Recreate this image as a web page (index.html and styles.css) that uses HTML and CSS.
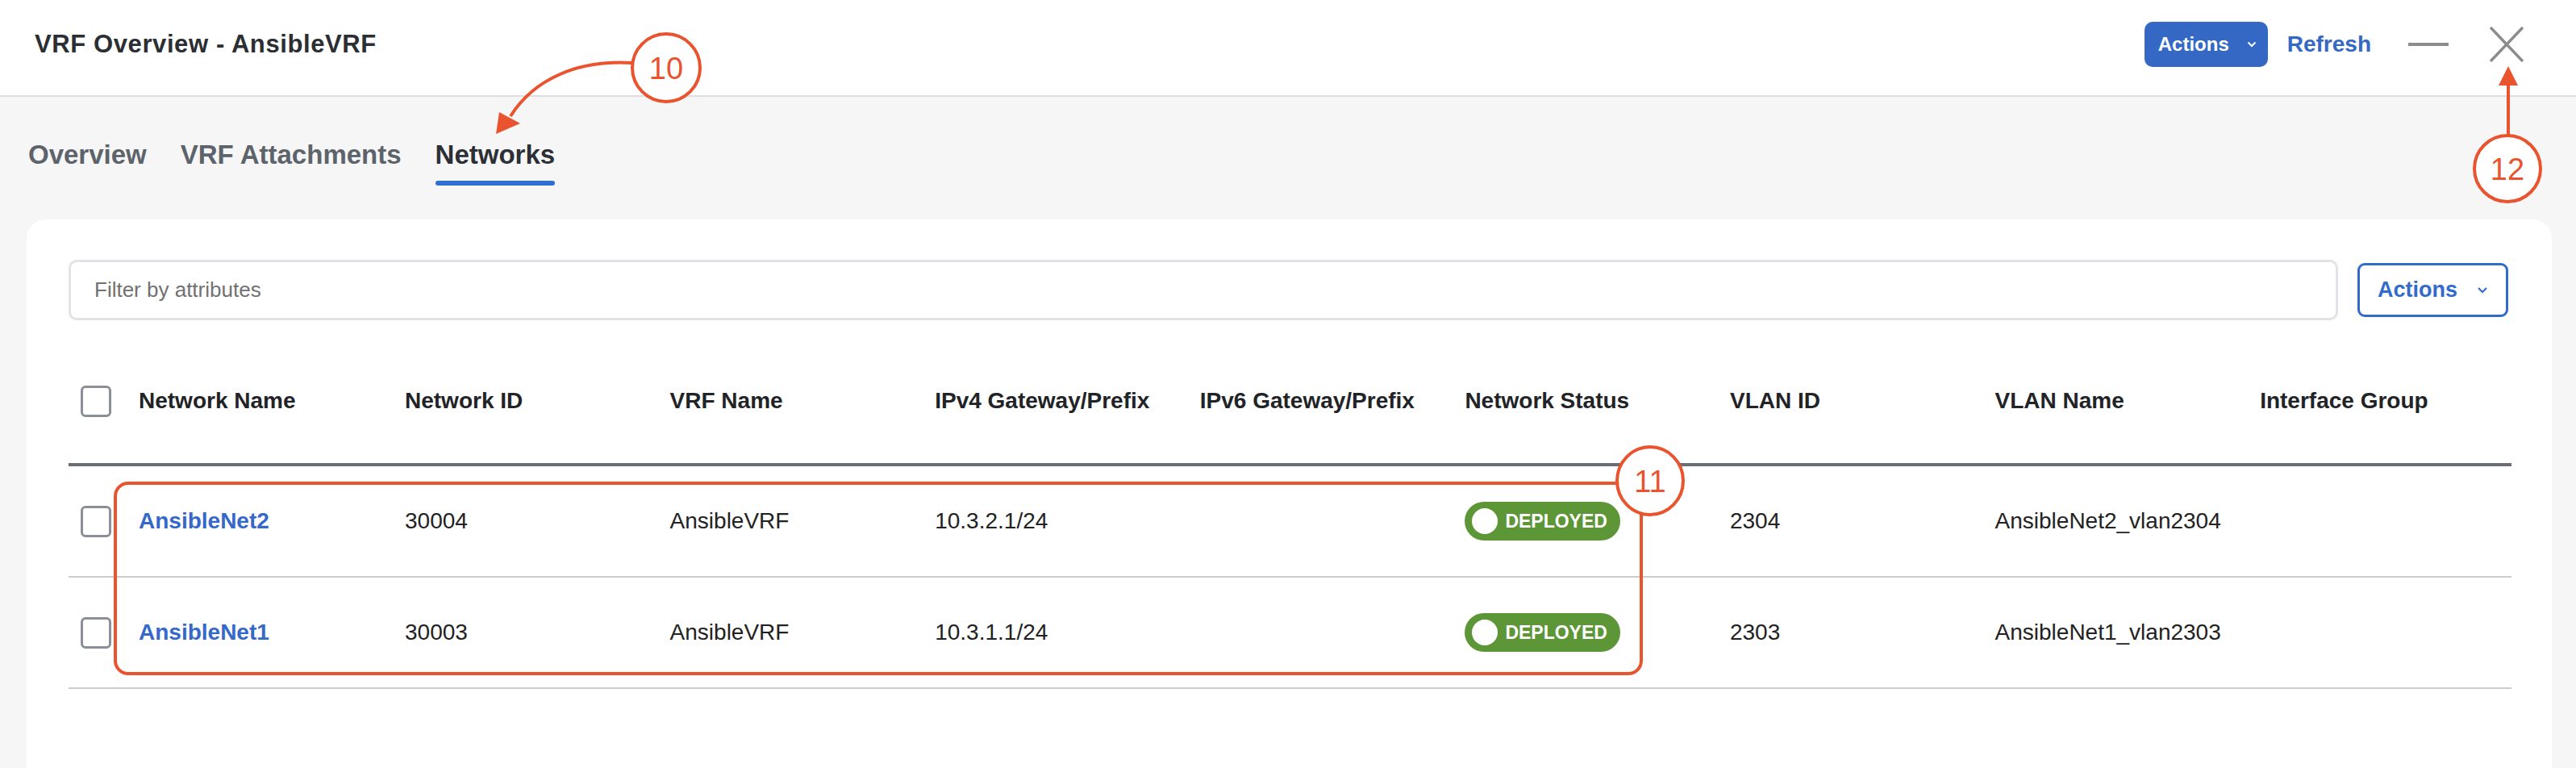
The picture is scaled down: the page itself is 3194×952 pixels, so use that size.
FILE: index.html
```html
<!DOCTYPE html>
<html lang="en">
<head>
  <meta charset="UTF-8">
  <meta name="viewport" content="width=device-width, initial-scale=1.0">
  <title>VRF Overview - AnsibleVRF</title>
  <link rel="stylesheet" href="styles.css">
</head>
<body>
  <header class="topbar">
    <h1 class="title">VRF Overview - AnsibleVRF</h1>
    <div class="top-actions">
      <button class="btn-solid">Actions
        <svg class="chev" width="12" height="8" viewBox="0 0 12 8"><polyline points="1.5,1.5 6,6 10.5,1.5" fill="none" stroke="#fff" stroke-width="2"/></svg>
      </button>
      <a class="refresh" href="#">Refresh</a>
      <svg class="win-min" width="50" height="6" viewBox="0 0 50 6"><line x1="0" y1="3" x2="50" y2="3" stroke="#8c8c8c" stroke-width="4"/></svg>
      <svg class="win-close" width="42" height="44" viewBox="0 0 42 44"><path d="M1 1 L41 43 M41 1 L1 43" stroke="#8c8c8c" stroke-width="3.5" fill="none"/></svg>
    </div>
  </header>

  <nav class="tabs">
    <div class="tab">Overview</div>
    <div class="tab">VRF Attachments</div>
    <div class="tab active">Networks</div>
  </nav>

  <section class="card">
    <div class="toolbar">
      <input class="filter" type="text" placeholder="Filter by attributes">
      <button class="btn-outline">Actions
        <svg class="chev" width="14" height="9" viewBox="0 0 14 9"><polyline points="2,2 7,7 12,2" fill="none" stroke="#326bcc" stroke-width="2.2"/></svg>
      </button>
    </div>

    <table class="grid">
      <colgroup>
        <col class="c-check">
        <col class="c-first">
        <col class="c-std"><col class="c-std"><col class="c-std"><col class="c-std">
        <col class="c-std"><col class="c-std"><col class="c-std">
        <col>
      </colgroup>
      <thead>
        <tr>
          <th><span class="box"></span></th>
          <th>Network Name</th>
          <th>Network ID</th>
          <th>VRF Name</th>
          <th>IPv4 Gateway/Prefix</th>
          <th>IPv6 Gateway/Prefix</th>
          <th>Network Status</th>
          <th>VLAN ID</th>
          <th>VLAN Name</th>
          <th>Interface Group</th>
        </tr>
      </thead>
      <tbody>
        <tr>
          <td><span class="box"></span></td>
          <td><a class="net" href="#">AnsibleNet2</a></td>
          <td>30004</td>
          <td>AnsibleVRF</td>
          <td>10.3.2.1/24</td>
          <td></td>
          <td><span class="badge"><span class="dot"></span>DEPLOYED</span></td>
          <td>2304</td>
          <td>AnsibleNet2_vlan2304</td>
          <td></td>
        </tr>
        <tr>
          <td><span class="box"></span></td>
          <td><a class="net" href="#">AnsibleNet1</a></td>
          <td>30003</td>
          <td>AnsibleVRF</td>
          <td>10.3.1.1/24</td>
          <td></td>
          <td><span class="badge"><span class="dot"></span>DEPLOYED</span></td>
          <td>2303</td>
          <td>AnsibleNet1_vlan2303</td>
          <td></td>
        </tr>
      </tbody>
    </table>
  </section>

  <!-- callouts drawn over the page -->
  <svg class="marks" width="3194" height="952" viewBox="0 0 3194 952">
    <path d="M784 78 C 716 74, 662 98, 633 144" fill="none" stroke="#e9532e" stroke-width="4"/>
    <polygon points="615,166 619,139 645,153" fill="#e9532e"/>
    <ellipse cx="826" cy="84" rx="42" ry="42" fill="#fff" stroke="#e9532e" stroke-width="4"/>
    <text class="mark-num" x="826" y="98">10</text>

    <rect x="143" y="599" width="1892" height="236" rx="16" fill="none" stroke="#e9532e" stroke-width="4"/>
    <ellipse cx="2046" cy="596" rx="41" ry="42" fill="#fff" stroke="#e9532e" stroke-width="4"/>
    <text class="mark-num" x="2046" y="610">11</text>

    <line x1="3110" y1="168" x2="3110" y2="102" stroke="#e9532e" stroke-width="4"/>
    <polygon points="3110,82 3098,106 3122,106" fill="#e9532e"/>
    <ellipse cx="3109" cy="209" rx="41" ry="41" fill="#fff" stroke="#e9532e" stroke-width="4"/>
    <text class="mark-num" x="3109" y="223">12</text>
  </svg>
</body>
</html>
```

FILE: styles.css
```css
body {
  margin: 0;
  background-color: #f6f6f6;
  font-family: "Liberation Sans", Arial, sans-serif;
  color: #212327;
  position: relative;
  width: 3194px;
  height: 952px;
  overflow: hidden;
}

.topbar {
  box-sizing: border-box;
  height: 120px;
  padding: 0 65px 8px 43px;
  background-color: #fff;
  border-bottom: 2px solid #dedede;
  display: flex;
  align-items: center;
  justify-content: space-between;
}

.title {
  margin: 0;
  font-size: 31px;
  font-weight: bold;
  letter-spacing: 0.6px;
  color: #2b2e33;
}

.top-actions {
  display: flex;
  align-items: center;
}

.btn-solid {
  box-sizing: border-box;
  width: 153px;
  height: 56px;
  padding: 0 0 0 17px;
  border: none;
  border-radius: 10px;
  background-color: #3468c4;
  color: #fff;
  font-family: inherit;
  font-size: 24px;
  font-weight: bold;
  display: flex;
  align-items: center;
  gap: 22px;
}

.refresh {
  margin-left: 24px;
  font-size: 28px;
  font-weight: bold;
  color: #3468c4;
  text-decoration: none;
}

.win-min {
  margin-left: 46px;
}

.win-close {
  margin-left: 51px;
}

.tabs {
  display: flex;
  gap: 42px;
  padding: 0 35px;
  margin-top: 53px;
}

.tab {
  font-size: 33px;
  line-height: 38px;
  font-weight: bold;
  color: #5d636b;
}

.tab::after {
  content: "";
  display: block;
  height: 6px;
  margin-top: 13px;
  border-radius: 3px;
}

.tab.active {
  color: #2c2f35;
}

.tab.active::after {
  background-color: #2f6fd0;
}

.card {
  min-height: 660px;
  margin: 42px 30px 0 33px;
  padding: 50px 50px 0 52px;
  background-color: #fff;
  border-radius: 24px 24px 0 0;
}

.toolbar {
  display: flex;
  align-items: center;
  gap: 24px;
  margin-right: 4px;
}

.filter {
  flex: 1;
  box-sizing: border-box;
  height: 75px;
  padding: 0 0 0 29px;
  border: 3px solid #e2e3e7;
  border-radius: 10px;
  font-family: inherit;
  font-size: 26px;
  outline: none;
}

.filter::placeholder {
  color: #717171;
}

.btn-outline {
  box-sizing: border-box;
  width: 187px;
  height: 67px;
  padding: 0 0 0 22px;
  border: 3px solid #326bcc;
  border-radius: 9px;
  background-color: #fff;
  color: #326bcc;
  font-family: inherit;
  font-size: 27px;
  font-weight: bold;
  display: flex;
  align-items: center;
  gap: 24px;
}

.grid {
  width: 100%;
  margin-top: 23px;
  border-collapse: collapse;
  table-layout: fixed;
}

.c-check { width: 87px; }
.c-first { width: 330px; }
.c-std { width: 328.6px; }

.grid th {
  height: 154px;
  padding: 0;
  text-align: left;
  font-size: 28px;
  font-weight: bold;
  color: #212327;
  border-bottom: 4px solid #686d76;
}

.grid td {
  height: 136px;
  padding: 0;
  font-size: 28px;
  color: #222;
  border-bottom: 2px solid #cccccc;
}

.grid th:first-child,
.grid td:first-child {
  padding-left: 15px;
}

.box {
  display: block;
  box-sizing: border-box;
  width: 38px;
  height: 39px;
  border: 3px solid #8b9098;
  border-radius: 6px;
}

.net {
  color: #3568c9;
  font-weight: bold;
  text-decoration: none;
}

.badge {
  display: inline-flex;
  align-items: center;
  gap: 9px;
  height: 48px;
  padding: 0 16px 0 9px;
  border-radius: 24px;
  background-color: #5c9636;
  color: #fff;
  font-size: 23px;
  font-weight: bold;
}

.dot {
  width: 32px;
  height: 32px;
  border-radius: 50%;
  background-color: #fff;
}

.marks {
  position: absolute;
  top: 0;
  left: 0;
  pointer-events: none;
}

.mark-num {
  font-family: "Liberation Sans", Arial, sans-serif;
  font-size: 38px;
  fill: #e9532e;
  text-anchor: middle;
}
```
